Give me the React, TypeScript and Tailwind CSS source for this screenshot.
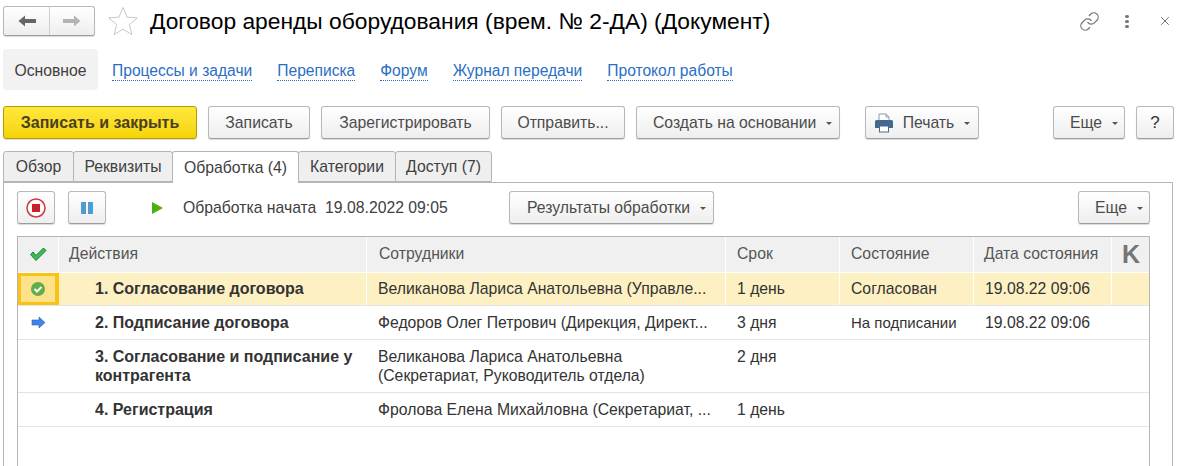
import { Link, X } from 'lucide-react'
import type { ReactNode } from 'react'

const btn =
  'h-[33px] flex items-center justify-center rounded-[3px] border border-[#b8b8b8] border-b-[#9c9c9c] bg-gradient-to-b from-white to-[#eeeeee] shadow-[0_1px_1px_rgba(0,0,0,0.15)] text-[15.75px] text-[#4b4b4b] whitespace-nowrap'

const cols = ['w-[41px]', 'w-[308px]', 'w-[359px]', 'w-[114px]', 'w-[134px]', 'w-[138px]', 'w-[37px]']

function Caret() {
  return <span className="ml-[10px] mt-[1px] w-0 h-0 border-x-[3px] border-x-transparent border-t-[3px] border-t-[#555]" />
}

function Btn({ w, children, className = '' }: { w: string; children: ReactNode; className?: string }) {
  return <div className={`${btn} ${w} ${className}`}>{children}</div>
}

function Tab({ label, w, active }: { label: string; w: string; active?: boolean }) {
  return (
    <div
      className={`${w} flex items-center justify-center border border-[#b5b5b5] rounded-t-[3px] text-[15.75px] -mr-px text-[#404040] ${
        active ? 'h-[32px] bg-white border-b-0 relative z-10' : 'h-[31px] bg-[#efefef]'
      }`}
    >
      {label}
    </div>
  )
}

function NavLink({ children }: { children: ReactNode }) {
  return <span className="text-[15.6px] leading-[18px] text-[#2a6fc4] border-b border-dotted border-[#2a6fc4]">{children}</span>
}

function Row({ h, sel, icon, title, who, term, state, date, smallState }: {
  h: string
  sel?: boolean
  icon?: ReactNode
  title: ReactNode
  who: ReactNode
  term: string
  state?: string
  date?: string
  smallState?: boolean
}) {
  const cell = `shrink-0 border-r border-r-white flex items-start px-[11px] text-[15.75px] leading-[19px] text-[#333] ${sel ? 'bg-[#fdf0c3] pt-[6px]' : 'pt-[7px]'}`
  return (
    <div className={`flex ${h} border-b border-[#e4e4e4]`}>
      <div className={`${cols[0]} shrink-0 flex items-center justify-center ${sel ? 'bg-[#fde28c] border-[3px] border-[#fbc216] border-r-[4px] pr-[1px]' : 'border-r border-r-white'}`}>
        {icon}
      </div>
      <div className={`${cols[1]} ${cell} !pl-[36px] !text-[16px] font-bold`}>{title}</div>
      <div className={`${cols[2]} ${cell} whitespace-nowrap`}>{who}</div>
      <div className={`${cols[3]} ${cell}`}>{term}</div>
      <div className={`${cols[4]} ${cell} whitespace-nowrap ${smallState ? '!text-[15px]' : ''}`}>{state}</div>
      <div className={`${cols[5]} ${cell}`}>{date}</div>
      <div className={`${cols[6]} shrink-0 ${sel ? 'bg-[#fdf0c3]' : ''}`} />
    </div>
  )
}

export default function App() {
  return (
    <div className="w-[1178px] h-[466px] overflow-hidden bg-white font-['Liberation_Sans',Arial,sans-serif]">
      {/* header */}
      <div className="flex items-center h-[30px] mt-[6px] ml-[3px]">
        <div className="flex w-[92px] h-[30px] rounded-[3px] border border-[#b8b8b8] border-b-[#9c9c9c] bg-gradient-to-b from-white to-[#eeeeee] shadow-[0_1px_1px_rgba(0,0,0,0.15)]">
          <div className="w-[46px] flex items-center justify-center border-r border-[#cfcfcf]">
            <svg width="18" height="12" viewBox="0 0 18 12">
              <path d="M0.500 6L7 0.500V4H18V8H7V11.500z" fill="#666" />
            </svg>
          </div>
          <div className="flex-1 flex items-center justify-center">
            <svg width="18" height="12" viewBox="0 0 18 12">
              <path d="M17.500 6L11 0.500V4H0V8H11V11.500z" fill="#b4b4b4" />
            </svg>
          </div>
        </div>
        <svg width="32" height="32" viewBox="0 0 32 32" className="ml-[12px]">
          <path d="M16 2.500l4 9.600 10.300.8-7.900 6.700 2.500 10-8.900-5.400-8.900 5.400 2.500-10-7.900-6.700 10.300-.8z" fill="#fff" stroke="#c4c9ce" strokeWidth="1" />
        </svg>
        <h1 className="ml-[11px] text-[22.8px] text-black whitespace-nowrap">Договор аренды оборудования (врем. № 2-ДА) (Документ)</h1>
        <div className="ml-auto flex items-center">
          <Link size={21} strokeWidth={1.4} className="text-[#777]" />
          <div className="ml-[25px] flex flex-col gap-[2px]">
            <span className="w-[4px] h-[3px] bg-[#777] rounded-full" />
            <span className="w-[4px] h-[3px] bg-[#777] rounded-full" />
            <span className="w-[4px] h-[3px] bg-[#777] rounded-full" />
          </div>
          <X size={14} strokeWidth={1.6} className="text-[#666] ml-[29px] mr-[6px]" />
        </div>
      </div>

      {/* nav */}
      <div className="flex items-center h-[41px] mt-[13px] ml-[3px] whitespace-nowrap">
        <div className="w-[95px] h-[41px] pt-[2px] flex items-center justify-center rounded-[4px] bg-[#f2f2f2] text-[15.75px] text-[#404040]">Основное</div>
        <div className="ml-[14px] mt-[3px] flex gap-[25px]">
          <NavLink>Процессы и задачи</NavLink>
          <NavLink>Переписка</NavLink>
          <NavLink>Форум</NavLink>
          <NavLink>Журнал передачи</NavLink>
          <NavLink>Протокол работы</NavLink>
        </div>
      </div>

      {/* toolbar */}
      <div className="flex mt-[16px] ml-[3px]">
        <div className="w-[194px] h-[33px] flex items-center justify-center rounded-[3px] border border-[#b39b00] bg-gradient-to-b from-[#ffe83a] to-[#f5d400] shadow-[0_1px_1px_rgba(0,0,0,0.15)] text-[16px] font-bold text-[#4a4020]">
          Записать и закрыть
        </div>
        <Btn w="w-[102px]" className="ml-[11px]">Записать</Btn>
        <Btn w="w-[169px]" className="ml-[11px]">Зарегистрировать</Btn>
        <Btn w="w-[124px]" className="ml-[11px]">Отправить...</Btn>
        <Btn w="w-[204px]" className="ml-[11px] !justify-start pl-[16px]">Создать на основании<Caret /></Btn>
        <Btn w="w-[114px]" className="ml-[25px]">
          <svg width="20" height="20" viewBox="0 0 20 20" className="mr-[9px]">
            <path d="M5 1h7l3 3v5H5z" fill="#fff" stroke="#8a9bb0" strokeWidth="1" />
            <path d="M12 1v3h3" fill="none" stroke="#8a9bb0" strokeWidth="1" />
            <path d="M1 8.500q0-1.500 1.500-1.500h15q1.500 0 1.500 1.500V15h-4v-2H5v2H1z" fill="#44698f" />
            <rect x="5.500" y="13" width="9" height="6" fill="#fff" stroke="#44698f" strokeWidth="1" />
          </svg>
          Печать<Caret />
        </Btn>
        <Btn w="w-[72px]" className="ml-[74px] !justify-start pl-[16px]">Еще<Caret /></Btn>
        <Btn w="w-[38px]" className="ml-[11px] !text-[17px] !text-[#333]">?</Btn>
      </div>

      {/* tabs */}
      <div className="flex items-start mt-[12px] ml-[3px] h-[31px]">
        <Tab label="Обзор" w="w-[71px]" />
        <Tab label="Реквизиты" w="w-[100px]" />
        <Tab label="Обработка (4)" w="w-[127px]" active />
        <Tab label="Категории" w="w-[98px]" />
        <Tab label="Доступ (7)" w="w-[97px]" />
      </div>

      {/* panel */}
      <div className="ml-[3px] w-[1170px] h-[300px] border border-[#b5b5b5] border-b-0 pl-[13px] pt-[8px]">
        <div className="flex items-center h-[33px]">
          <Btn w="w-[38px]">
            <svg width="20" height="20" viewBox="0 0 20 20">
              <circle cx="10" cy="10" r="9" fill="#fff" stroke="#d0343c" strokeWidth="1.500" />
              <rect x="6" y="6" width="8" height="8" fill="#cc1f2a" />
            </svg>
          </Btn>
          <Btn w="w-[38px]" className="ml-[13px]">
            <span className="w-[5px] h-[12px] bg-[#4f9bd4]" />
            <span className="w-[5px] h-[12px] bg-[#4f9bd4] ml-[2px]" />
          </Btn>
          <span className="ml-[46px] w-0 h-0 border-y-[6px] border-y-transparent border-l-[11px] border-l-[#4caf0c]" />
          <span className="ml-[20px] w-[266px] text-[15.75px] text-[#404040] whitespace-nowrap">Обработка начата&nbsp; 19.08.2022 09:05</span>
          <Btn w="w-[205px]" className="ml-[60px] !justify-start pl-[17px]">Результаты обработки<Caret /></Btn>
          <Btn w="w-[72px]" className="ml-[364px] !justify-start pl-[16px]">Еще<Caret /></Btn>
        </div>

        {/* table */}
        <div className="mt-[12px] w-[1133px] h-[240px] border border-[#b5b5b5] border-b-0">
          <div className="flex h-[36px] bg-[#f0f0f0] border-b border-white text-[15.75px] text-[#555]">
            <div className={`${cols[0]} border-r border-white flex items-center justify-center`}>
              <svg width="18" height="15" viewBox="0 0 18 15">
                <path d="M1.500 7.500l5.500 6L17 3.500 14.500 1 7 8.500 4 5z" fill="#3cbb52" stroke="#1e7f32" strokeWidth="1" />
              </svg>
            </div>
            {['Действия', 'Сотрудники', 'Срок', 'Состояние', 'Дата состояния'].map((t, i) => (
              <div key={t} className={`${cols[i + 1]} border-r border-white flex items-center pb-[2px] ${i === 0 || i === 4 ? 'pl-[10px]' : i === 1 ? 'pl-[12px]' : 'pl-[11px]'} whitespace-nowrap`}>{t}</div>
            ))}
            <div className={`${cols[6]} flex items-center justify-center pl-px text-[25px] font-bold text-[#757575]`}>K</div>
          </div>
          <Row
            h="h-[33px]"
            sel
            icon={
              <svg width="14" height="14" viewBox="0 0 14 14">
                <circle cx="7" cy="7" r="7" fill="#5fae46" />
                <path d="M3.500 7l2.500 2.500 4.500-4.500" fill="none" stroke="#fff" strokeWidth="2" />
              </svg>
            }
            title="1. Согласование договора"
            who="Великанова Лариса Анатольевна (Управле..."
            term="1 день"
            state="Согласован"
            date="19.08.22 09:06"
          />
          <Row
            h="h-[34px]"
            icon={
              <svg width="15" height="13" viewBox="0 0 15 13">
                <path d="M1 4h7V1l6 5.500L8 12V9H1z" fill="#3f84ee" stroke="#2a62b8" strokeWidth="0.600" />
              </svg>
            }
            title="2. Подписание договора"
            who="Федоров Олег Петрович (Дирекция, Директ..."
            term="3 дня"
            state="На подписании"
            smallState
            date="19.08.22 09:06"
          />
          <Row
            h="h-[53px]"
            title={<>3. Согласование и подписание у контрагента</>}
            who={<>Великанова Лариса Анатольевна<br />(Секретариат, Руководитель отдела)</>}
            term="2 дня"
          />
          <Row
            h="h-[34px]"
            title="4. Регистрация"
            who="Фролова Елена Михайловна (Секретариат, ..."
            term="1 день"
          />
        </div>
      </div>
    </div>
  )
}
